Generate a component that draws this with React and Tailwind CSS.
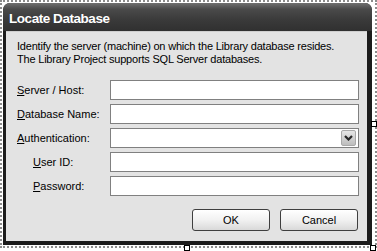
const rows = [
  { key: "S", rest: "erver / Host:", indent: false },
  { key: "D", rest: "atabase Name:", indent: false },
  { key: "A", rest: "uthentication:", indent: false, combo: true },
  { key: "U", rest: "ser ID:", indent: true },
  { key: "P", rest: "assword:", indent: true },
];

function Handle({ className }) {
  return <div className={`absolute h-[6px] w-[6px] border border-black bg-white ${className}`} />;
}

export default function App() {
  return (
    <div className="h-[251px] w-[377px] overflow-hidden bg-white font-['Liberation_Sans',Arial,sans-serif] text-black">
      <div className="relative h-[248px] w-[377px] border-2 border-dotted border-[#8c8c8c] p-px">
        <div className="flex h-[242px] w-[369px] flex-col rounded-t-[7px] bg-[#1c1c1c]">
          <div className="flex h-[28px] items-center rounded-t-[7px] bg-[linear-gradient(180deg,#707070_0%,#4a4a4a_22%,#3a3a3a_60%,#303030_100%)] pl-[6px] pt-[4px]">
            <span className="text-[13.5px] font-bold tracking-[-0.45px] text-white">
              Locate Database
            </span>
          </div>

          <div className="mb-[4px] ml-[3px] mr-[5px] flex-1 border-t border-[#cfcfcf] bg-[#e3e3e3]">
            <div className="px-[11px] pt-[8px] text-[11px] leading-[13px] tracking-[-0.2px]">
              <p>Identify the server (machine) on which the Library database resides.</p>
              <p>The Library Project supports SQL Server databases.</p>
            </div>

            <div className="mt-[14px] flex flex-col gap-[4px] pl-[11px]">
              {rows.map((row) => (
                <div key={row.key} className="flex h-[20px] items-center">
                  <div className={`w-[93px] text-[11px] ${row.indent ? "pl-[16px]" : ""}`}>
                    <span className="underline underline-offset-[1px]">{row.key}</span>
                    {row.rest}
                  </div>
                  <div className="flex h-[20px] w-[249px] items-center justify-end border border-[#808080] bg-white pr-[2px]">
                    {row.combo ? (
                      <div className="flex h-[16px] w-[15px] items-center justify-center rounded-[2px] border border-[#a9a9a9] bg-[linear-gradient(180deg,#e6e6e6,#bdbdbd)]">
                        <svg width="9" height="6" viewBox="0 0 9 6">
                          <path d="M1 1 L4.5 4.5 L8 1" fill="none" stroke="#262626" strokeWidth="2.2" />
                        </svg>
                      </div>
                    ) : null}
                  </div>
                </div>
              ))}
            </div>

            <div className="mt-[13px] flex justify-end gap-[10px] pr-[9px]">
              {["OK", "Cancel"].map((label) => (
                <button
                  key={label}
                  className="h-[22px] w-[78px] rounded-[3px] border border-[#3f3f3f] bg-[linear-gradient(180deg,#ffffff_0%,#f1f1f1_50%,#d9d9d9_100%)] text-[11px]"
                >
                  {label}
                </button>
              ))}
            </div>
          </div>
        </div>

        <Handle className="left-[369px] top-[119px]" />
        <Handle className="left-[182px] top-[243px]" />
        <Handle className="left-[368px] top-[243px]" />
      </div>
    </div>
  );
}
